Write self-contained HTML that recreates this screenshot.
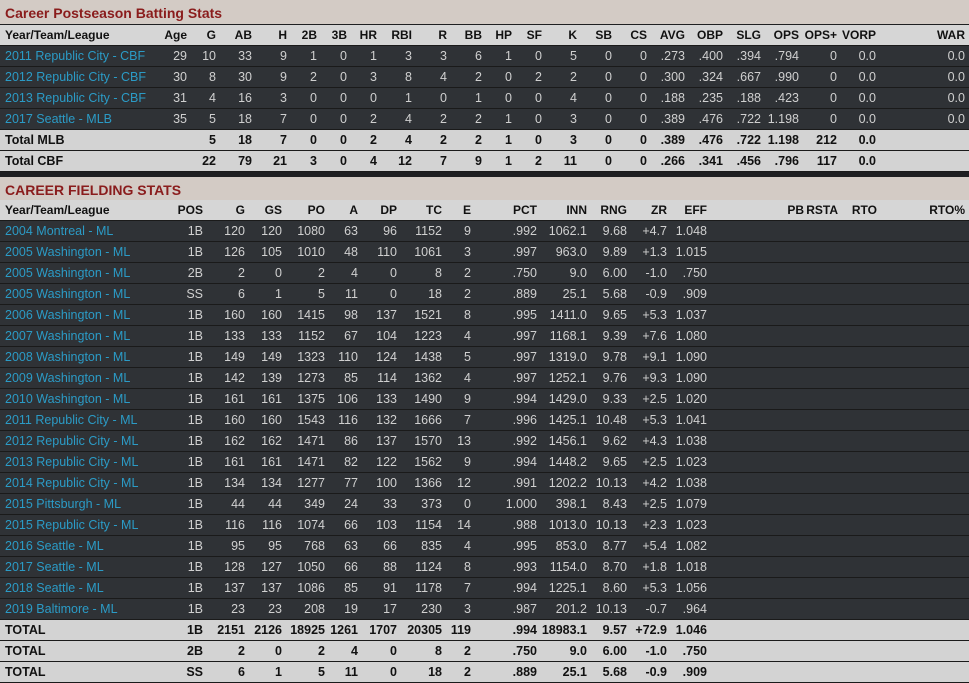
<!DOCTYPE html>
<html><head><meta charset="utf-8"><style>
body{margin:0;width:969px;height:683px;overflow:hidden;background:#1e1f21;font-family:"Liberation Sans",sans-serif;font-size:12.5px;}
.r{position:absolute;left:0;width:969px;height:20px;line-height:21px;white-space:nowrap;border-bottom:1px solid #1a1a1a;}
.r span{display:inline-block;text-align:right;overflow:visible;}
.r span:first-child{text-align:left;padding-left:5px;}
.t{background:#d3cbc5;color:#8a1c1c;font-weight:bold;font-size:14px;height:24px;line-height:26px;padding-left:5px;width:964px;border:none;}
.h{background:#d6d6d6;color:#111;font-weight:bold;font-size:12px;}
.d{background:#2f3236;color:#d0d0d0;}
.d span:first-child{color:#2b9bc6;}
.x{background:#d3d3d3;color:#111;font-weight:bold;}
.b span:nth-child(1){width:155px}
.b span:nth-child(2){width:27px}.b span:nth-child(3){width:29px}.b span:nth-child(4){width:36px}.b span:nth-child(5){width:35px}
.b span:nth-child(6){width:30px}.b span:nth-child(7){width:30px}.b span:nth-child(8){width:30px}.b span:nth-child(9){width:35px}
.b span:nth-child(10){width:35px}.b span:nth-child(11){width:35px}.b span:nth-child(12){width:30px}.b span:nth-child(13){width:30px}
.b span:nth-child(14){width:35px}.b span:nth-child(15){width:35px}.b span:nth-child(16){width:35px}.b span:nth-child(17){width:38px}
.b span:nth-child(18){width:38px}.b span:nth-child(19){width:38px}.b span:nth-child(20){width:38px}.b span:nth-child(21){width:38px}
.b span:nth-child(22){width:39px}.b span:nth-child(23){width:89px}
.f span:nth-child(1){width:155px}
.f span:nth-child(2){width:43px}.f span:nth-child(3){width:42px}.f span:nth-child(4){width:37px}.f span:nth-child(5){width:43px}
.f span:nth-child(6){width:33px}.f span:nth-child(7){width:39px}.f span:nth-child(8){width:45px}.f span:nth-child(9){width:29px}
.f span:nth-child(10){width:66px}.f span:nth-child(11){width:50px}.f span:nth-child(12){width:40px}.f span:nth-child(13){width:40px}
.f span:nth-child(14){width:40px}.f span:nth-child(15){width:97px}.f span:nth-child(16){width:34px}.f span:nth-child(17){width:39px}
.f span:nth-child(18){width:88px}
</style></head><body>
<div class="r t" style="top:0">Career Postseason Batting Stats</div>
<div class="r h b" style="top:25px"><span>Year/Team/League</span><span>Age</span><span>G</span><span>AB</span><span>H</span><span>2B</span><span>3B</span><span>HR</span><span>RBI</span><span>R</span><span>BB</span><span>HP</span><span>SF</span><span>K</span><span>SB</span><span>CS</span><span>AVG</span><span>OBP</span><span>SLG</span><span>OPS</span><span>OPS+</span><span>VORP</span><span>WAR</span></div>
<div class="r d b" style="top:46px"><span>2011 Republic City - CBF</span><span>29</span><span>10</span><span>33</span><span>9</span><span>1</span><span>0</span><span>1</span><span>3</span><span>3</span><span>6</span><span>1</span><span>0</span><span>5</span><span>0</span><span>0</span><span>.273</span><span>.400</span><span>.394</span><span>.794</span><span>0</span><span>0.0</span><span>0.0</span></div>
<div class="r d b" style="top:67px"><span>2012 Republic City - CBF</span><span>30</span><span>8</span><span>30</span><span>9</span><span>2</span><span>0</span><span>3</span><span>8</span><span>4</span><span>2</span><span>0</span><span>2</span><span>2</span><span>0</span><span>0</span><span>.300</span><span>.324</span><span>.667</span><span>.990</span><span>0</span><span>0.0</span><span>0.0</span></div>
<div class="r d b" style="top:88px"><span>2013 Republic City - CBF</span><span>31</span><span>4</span><span>16</span><span>3</span><span>0</span><span>0</span><span>0</span><span>1</span><span>0</span><span>1</span><span>0</span><span>0</span><span>4</span><span>0</span><span>0</span><span>.188</span><span>.235</span><span>.188</span><span>.423</span><span>0</span><span>0.0</span><span>0.0</span></div>
<div class="r d b" style="top:109px"><span>2017 Seattle - MLB</span><span>35</span><span>5</span><span>18</span><span>7</span><span>0</span><span>0</span><span>2</span><span>4</span><span>2</span><span>2</span><span>1</span><span>0</span><span>3</span><span>0</span><span>0</span><span>.389</span><span>.476</span><span>.722</span><span>1.198</span><span>0</span><span>0.0</span><span>0.0</span></div>
<div class="r x b" style="top:130px"><span>Total MLB</span><span></span><span>5</span><span>18</span><span>7</span><span>0</span><span>0</span><span>2</span><span>4</span><span>2</span><span>2</span><span>1</span><span>0</span><span>3</span><span>0</span><span>0</span><span>.389</span><span>.476</span><span>.722</span><span>1.198</span><span>212</span><span>0.0</span><span></span></div>
<div class="r x b" style="top:151px"><span>Total CBF</span><span></span><span>22</span><span>79</span><span>21</span><span>3</span><span>0</span><span>4</span><span>12</span><span>7</span><span>9</span><span>1</span><span>2</span><span>11</span><span>0</span><span>0</span><span>.266</span><span>.341</span><span>.456</span><span>.796</span><span>117</span><span>0.0</span><span></span></div>
<div class="r t" style="top:177px;height:23px">CAREER FIELDING STATS</div>
<div class="r h f" style="top:200px"><span>Year/Team/League</span><span>POS</span><span>G</span><span>GS</span><span>PO</span><span>A</span><span>DP</span><span>TC</span><span>E</span><span>PCT</span><span>INN</span><span>RNG</span><span>ZR</span><span>EFF</span><span>PB</span><span>RSTA</span><span>RTO</span><span>RTO%</span></div>
<div class="r d f" style="top:221px"><span>2004 Montreal - ML</span><span>1B</span><span>120</span><span>120</span><span>1080</span><span>63</span><span>96</span><span>1152</span><span>9</span><span>.992</span><span>1062.1</span><span>9.68</span><span>+4.7</span><span>1.048</span></div>
<div class="r d f" style="top:242px"><span>2005 Washington - ML</span><span>1B</span><span>126</span><span>105</span><span>1010</span><span>48</span><span>110</span><span>1061</span><span>3</span><span>.997</span><span>963.0</span><span>9.89</span><span>+1.3</span><span>1.015</span></div>
<div class="r d f" style="top:263px"><span>2005 Washington - ML</span><span>2B</span><span>2</span><span>0</span><span>2</span><span>4</span><span>0</span><span>8</span><span>2</span><span>.750</span><span>9.0</span><span>6.00</span><span>-1.0</span><span>.750</span></div>
<div class="r d f" style="top:284px"><span>2005 Washington - ML</span><span>SS</span><span>6</span><span>1</span><span>5</span><span>11</span><span>0</span><span>18</span><span>2</span><span>.889</span><span>25.1</span><span>5.68</span><span>-0.9</span><span>.909</span></div>
<div class="r d f" style="top:305px"><span>2006 Washington - ML</span><span>1B</span><span>160</span><span>160</span><span>1415</span><span>98</span><span>137</span><span>1521</span><span>8</span><span>.995</span><span>1411.0</span><span>9.65</span><span>+5.3</span><span>1.037</span></div>
<div class="r d f" style="top:326px"><span>2007 Washington - ML</span><span>1B</span><span>133</span><span>133</span><span>1152</span><span>67</span><span>104</span><span>1223</span><span>4</span><span>.997</span><span>1168.1</span><span>9.39</span><span>+7.6</span><span>1.080</span></div>
<div class="r d f" style="top:347px"><span>2008 Washington - ML</span><span>1B</span><span>149</span><span>149</span><span>1323</span><span>110</span><span>124</span><span>1438</span><span>5</span><span>.997</span><span>1319.0</span><span>9.78</span><span>+9.1</span><span>1.090</span></div>
<div class="r d f" style="top:368px"><span>2009 Washington - ML</span><span>1B</span><span>142</span><span>139</span><span>1273</span><span>85</span><span>114</span><span>1362</span><span>4</span><span>.997</span><span>1252.1</span><span>9.76</span><span>+9.3</span><span>1.090</span></div>
<div class="r d f" style="top:389px"><span>2010 Washington - ML</span><span>1B</span><span>161</span><span>161</span><span>1375</span><span>106</span><span>133</span><span>1490</span><span>9</span><span>.994</span><span>1429.0</span><span>9.33</span><span>+2.5</span><span>1.020</span></div>
<div class="r d f" style="top:410px"><span>2011 Republic City - ML</span><span>1B</span><span>160</span><span>160</span><span>1543</span><span>116</span><span>132</span><span>1666</span><span>7</span><span>.996</span><span>1425.1</span><span>10.48</span><span>+5.3</span><span>1.041</span></div>
<div class="r d f" style="top:431px"><span>2012 Republic City - ML</span><span>1B</span><span>162</span><span>162</span><span>1471</span><span>86</span><span>137</span><span>1570</span><span>13</span><span>.992</span><span>1456.1</span><span>9.62</span><span>+4.3</span><span>1.038</span></div>
<div class="r d f" style="top:452px"><span>2013 Republic City - ML</span><span>1B</span><span>161</span><span>161</span><span>1471</span><span>82</span><span>122</span><span>1562</span><span>9</span><span>.994</span><span>1448.2</span><span>9.65</span><span>+2.5</span><span>1.023</span></div>
<div class="r d f" style="top:473px"><span>2014 Republic City - ML</span><span>1B</span><span>134</span><span>134</span><span>1277</span><span>77</span><span>100</span><span>1366</span><span>12</span><span>.991</span><span>1202.2</span><span>10.13</span><span>+4.2</span><span>1.038</span></div>
<div class="r d f" style="top:494px"><span>2015 Pittsburgh - ML</span><span>1B</span><span>44</span><span>44</span><span>349</span><span>24</span><span>33</span><span>373</span><span>0</span><span>1.000</span><span>398.1</span><span>8.43</span><span>+2.5</span><span>1.079</span></div>
<div class="r d f" style="top:515px"><span>2015 Republic City - ML</span><span>1B</span><span>116</span><span>116</span><span>1074</span><span>66</span><span>103</span><span>1154</span><span>14</span><span>.988</span><span>1013.0</span><span>10.13</span><span>+2.3</span><span>1.023</span></div>
<div class="r d f" style="top:536px"><span>2016 Seattle - ML</span><span>1B</span><span>95</span><span>95</span><span>768</span><span>63</span><span>66</span><span>835</span><span>4</span><span>.995</span><span>853.0</span><span>8.77</span><span>+5.4</span><span>1.082</span></div>
<div class="r d f" style="top:557px"><span>2017 Seattle - ML</span><span>1B</span><span>128</span><span>127</span><span>1050</span><span>66</span><span>88</span><span>1124</span><span>8</span><span>.993</span><span>1154.0</span><span>8.70</span><span>+1.8</span><span>1.018</span></div>
<div class="r d f" style="top:578px"><span>2018 Seattle - ML</span><span>1B</span><span>137</span><span>137</span><span>1086</span><span>85</span><span>91</span><span>1178</span><span>7</span><span>.994</span><span>1225.1</span><span>8.60</span><span>+5.3</span><span>1.056</span></div>
<div class="r d f" style="top:599px"><span>2019 Baltimore - ML</span><span>1B</span><span>23</span><span>23</span><span>208</span><span>19</span><span>17</span><span>230</span><span>3</span><span>.987</span><span>201.2</span><span>10.13</span><span>-0.7</span><span>.964</span></div>
<div class="r x f" style="top:620px"><span>TOTAL</span><span>1B</span><span>2151</span><span>2126</span><span>18925</span><span>1261</span><span>1707</span><span>20305</span><span>119</span><span>.994</span><span>18983.1</span><span>9.57</span><span>+72.9</span><span>1.046</span></div>
<div class="r x f" style="top:641px"><span>TOTAL</span><span>2B</span><span>2</span><span>0</span><span>2</span><span>4</span><span>0</span><span>8</span><span>2</span><span>.750</span><span>9.0</span><span>6.00</span><span>-1.0</span><span>.750</span></div>
<div class="r x f" style="top:662px"><span>TOTAL</span><span>SS</span><span>6</span><span>1</span><span>5</span><span>11</span><span>0</span><span>18</span><span>2</span><span>.889</span><span>25.1</span><span>5.68</span><span>-0.9</span><span>.909</span></div>
</body></html>
